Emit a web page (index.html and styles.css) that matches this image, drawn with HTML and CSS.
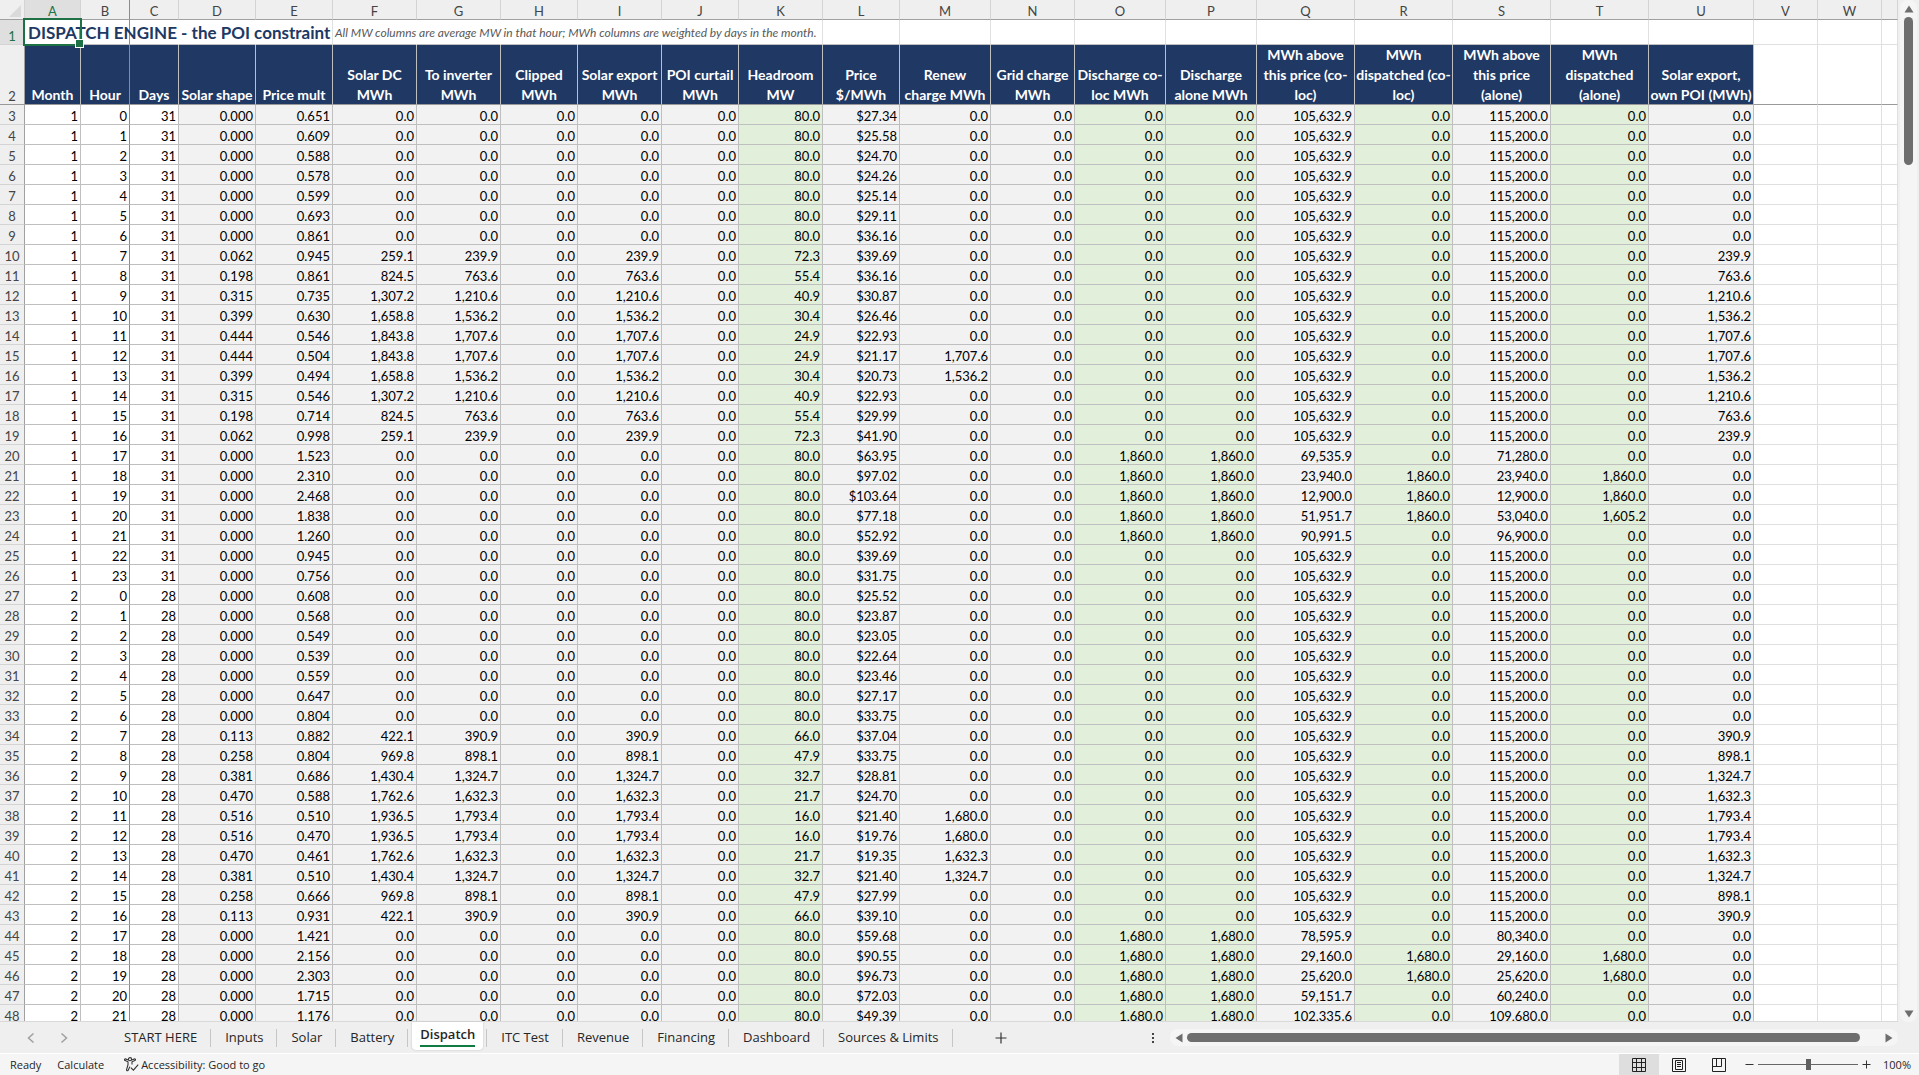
FILE: index.html
```html
<!DOCTYPE html>
<html lang="en">
<head>
    <meta charset="UTF-8">
    <meta name="viewport" content="width=device-width, initial-scale=1.0">
    <title>Dispatch</title>
    <link rel="stylesheet" href="styles.css">
</head>
<body>

    <main class="workarea">
        <div class="sheet">
            <table class="grid">
                <colgroup id="cols"></colgroup>
                <thead>
                    <tr class="letters" id="letters"></tr>
                </thead>
                <tbody id="rows"></tbody>
            </table>
        </div>

        <div class="vscroll">
            <svg width="10" height="8" viewBox="0 0 10 8"><path d="M5 0.5L9.5 7.5H0.5Z" fill="#6e6e6e"/></svg>
            <div class="vscroll-track"><div class="vscroll-thumb"></div></div>
            <svg width="10" height="8" viewBox="0 0 10 8"><path d="M5 7.5L9.5 0.5H0.5Z" fill="#6e6e6e"/></svg>
        </div>
    </main>

    <nav class="tabbar">
        <div class="arrows">
            <button class="arrow" aria-label="Previous sheet"><svg width="8" height="12" viewBox="0 0 8 12"><path d="M6.5 1.5L1.5 6L6.5 10.5" fill="none" stroke="#a0a0a0" stroke-width="1.5"/></svg></button>
            <button class="arrow" aria-label="Next sheet"><svg width="8" height="12" viewBox="0 0 8 12"><path d="M1.5 1.5L6.5 6L1.5 10.5" fill="none" stroke="#a0a0a0" stroke-width="1.5"/></svg></button>
        </div>
        <div class="tabs">
            <button class="tab">START HERE</button>
            <button class="tab">Inputs</button>
            <button class="tab">Solar</button>
            <button class="tab">Battery</button>
            <button class="tab active"><span>Dispatch</span></button>
            <button class="tab">ITC Test</button>
            <button class="tab">Revenue</button>
            <button class="tab">Financing</button>
            <button class="tab">Dashboard</button>
            <button class="tab">Sources &amp; Limits</button>
        </div>
        <button class="add" aria-label="New sheet"><svg width="12" height="12" viewBox="0 0 12 12"><path d="M6 0.5V11.5M0.5 6H11.5" stroke="#333" stroke-width="1.2"/></svg></button>
        <div class="splitter"><i></i><i></i><i></i></div>
        <div class="hscroll">
            <svg width="8" height="10" viewBox="0 0 8 10"><path d="M0.5 5L7.5 0.5V9.5Z" fill="#6e6e6e"/></svg>
            <div class="hscroll-track"><div class="hscroll-thumb"></div></div>
            <svg width="8" height="10" viewBox="0 0 8 10"><path d="M7.5 5L0.5 0.5V9.5Z" fill="#6e6e6e"/></svg>
        </div>
    </nav>

    <footer class="status">
        <span class="status-text">Ready</span>
        <span class="status-text">Calculate</span>
        <button class="access">
            <svg width="15" height="15" viewBox="0 0 15 15" fill="none" stroke="#333" stroke-width="1.1">
                <circle cx="6" cy="2.2" r="1.6"/>
                <path d="M4.4 2.9L1.3 1.9C0.3 1.8 0.2 3.3 1.1 3.6L4 4.8V7.6L2.6 12.6C2.4 13.9 3.9 14.2 4.3 13.1L5.8 9.6"/>
                <path d="M7.6 2.9L10.7 1.9C11.7 1.8 11.8 3.3 10.9 3.6L8 4.8V7.4"/>
                <path d="M6.8 10.6L9.4 13.2L14.2 7.6"/>
            </svg>
            Accessibility: Good to go
        </button>

        <div class="views">
            <button class="view on" aria-label="Normal view"><svg width="14" height="14" viewBox="0 0 14 14" fill="none" stroke="#222"><path d="M0.5 0.5H13.5V13.5H0.5ZM4.5 0.5V13.5M9.5 0.5V13.5M0.5 4.5H13.5M0.5 9.5H13.5"/></svg></button>
            <button class="view" aria-label="Page layout view"><svg width="14" height="14" viewBox="0 0 14 14" fill="none" stroke="#222"><path d="M0.5 0.5H13.5V13.5H0.5ZM3.5 2.5H10.5V11.5H3.5ZM5 4.5H9M5 6.5H9M5 8.5H9"/></svg></button>
            <button class="view" aria-label="Page break view"><svg width="14" height="14" viewBox="0 0 14 14" fill="none" stroke="#222"><path d="M0.5 0.5H13.5V13.5H0.5ZM4.5 0.5V8.5M9.5 0.5V8.5M0.5 8.5H9.5"/></svg></button>
        </div>
        <div class="zoom">
            <button class="zoom-btn" aria-label="Zoom out"><svg width="9" height="9" viewBox="0 0 9 9"><path d="M0.5 4.5H8.5" stroke="#333"/></svg></button>
            <input class="zoom-range" type="range" min="10" max="190" value="100" aria-label="Zoom">
            <button class="zoom-btn" aria-label="Zoom in"><svg width="9" height="9" viewBox="0 0 9 9"><path d="M0.5 4.5H8.5M4.5 0.5V8.5" stroke="#333"/></svg></button>
        </div>
        <button class="percent">100%</button>
    </footer>

    <script src="script.js"></script>
</body>
</html>
```

FILE: styles.css
```css
*{
    box-sizing: border-box;
}

body{
    margin: 0;
    height: 100vh;
    display: flex;
    flex-direction: column;
    overflow: hidden;
    background-color: #efefef;
    font-family: "Open Sans", "Noto Sans", sans-serif;
    color: #262626;
}

button{
    border: 0;
    padding: 0;
    background: none;
    font: inherit;
    color: inherit;
}

svg{
    display: block;
    flex: none;
}

/* sheet */

.workarea{
    flex: 1;
    min-height: 0;
    display: flex;
}

.sheet{
    flex: 1;
    min-width: 0;
    overflow: hidden;
    background-color: white;
    border-bottom: 1px solid #d9d9d9;
}

.grid{
    width: 100%;
    table-layout: fixed;
    border-collapse: separate;
    border-spacing: 0;
    font-family: Lato, "Open Sans", sans-serif;
    font-size: 13px;
    line-height: 16px;
    color: black;
}

.grid th,
.grid td{
    height: 20px;
    padding: 3px 2px 0 0;
    border-right: 1px solid #e0e0e0;
    border-bottom: 1px solid #e0e0e0;
    text-align: right;
    white-space: nowrap;
    font-weight: normal;
}

.grid .letters th{
    padding: 3px 0 0;
    text-align: center;
    background-color: #efefef;
    border-right-color: #d4d4d4;
    border-bottom-color: #a0a0a0;
    color: #444;
}

.grid .rownum{
    padding: 3px 0 0;
    text-align: center;
    vertical-align: bottom;
    background-color: #efefef;
    border-right-color: #a0a0a0;
    border-bottom-color: #d4d4d4;
    color: #444;
}

.grid .picked{
    background-color: #dfdfdf !important;
    color: #1e7145 !important;
}

.corner svg{
    margin-left: 9px;
}

.grid .calc,
.grid .key,
.grid .input{
    border-color: #bfbfbf;
}

.grid .calc{
    background-color: #f2f2f2;
}

.grid .key{
    background-color: #e2efda;
}

.grid .title-row td,
.grid .title-row th{
    height: 25px;
    vertical-align: bottom;
}

.grid .title-row td{
    padding: 2px 0 0 3px;
    text-align: left;
    line-height: 22px;
}

.grid .title-row .spill{
    border-right-color: transparent;
}

.grid .title-row .under{
    border-bottom-color: #bfbfbf;
}

.grid .title-row .title{
    font-size: 17px;
    font-weight: bold;
    color: #203864;
}

.grid .title-row .note{
    padding-left: 2px;
    font-size: 12px;
    font-style: italic;
    color: #595959;
}

.a1{
    position: relative;
}

.cursor{
    position: absolute;
    inset: -2px;
    border: 2px solid #1e7145;
}

.cursor::after{
    content: "";
    position: absolute;
    right: -4px;
    bottom: -4px;
    width: 7px;
    height: 7px;
    border: 1px solid white;
    background-color: #1e7145;
}

.grid .head-row th,
.grid .head-row td{
    height: 60px;
    vertical-align: bottom;
    border-bottom-color: #999;
}

.grid .head-row .head{
    padding: 0;
    text-align: center;
    font-size: 14px;
    font-weight: bold;
    line-height: 20px;
    background-color: #203864;
    border-right-color: #bfbfbf;
    color: white;
}

.head div{
    margin-bottom: -1px;
}

/* line of the frozen panes */
.grid .frozen{
    border-right-color: #8c8c8c !important;
}

.vscroll{
    flex: none;
    width: 17px;
    margin: 0 2px 0 2px;
    padding: 5px 0 4px;
    display: flex;
    flex-direction: column;
    align-items: center;
    gap: 4px;
    border-radius: 8px;
    background-color: #f5f5f5;
}

.vscroll-track{
    flex: 1;
}

.vscroll-thumb{
    width: 9px;
    height: 15%;
    border-radius: 5px;
    background-color: #6e6e6e;
}

/* sheet tabs */

.tabbar{
    flex: none;
    height: 32px;
    display: flex;
    align-items: center;
    padding-right: 21px;
    border-bottom: 1px solid white;
    font-size: 13px;
}

.arrows{
    display: flex;
    gap: 25px;
    width: 110px;
    padding-left: 27px;
}

.tabs{
    display: flex;
    align-self: stretch;
}

.tab{
    position: relative;
    height: 30px;
    padding: 0 14px;
    line-height: 28px;
}

.tab::after{
    content: "";
    position: absolute;
    right: 0;
    top: 7px;
    width: 1px;
    height: 18px;
    background-color: #c6c6c6;
}

.tab.active{
    height: 28px;
    margin: 0 4px 0 4px;
    padding: 0 8px 3px;
    border-radius: 0 0 4px 4px;
    background-color: white;
    box-shadow: 0 0 2px #bbb;
    font-weight: 600;
}

.tab.active::after{
    right: -4px;
}

.tab.active span{
    display: block;
    line-height: 22px;
    border-bottom: 2px solid #107c41;
}

.add{
    margin-left: 42px;
}

.splitter{
    display: flex;
    flex-direction: column;
    gap: 2px;
    margin-left: auto;
    margin-right: 16px;
}

.splitter i{
    width: 2px;
    height: 2px;
    background-color: #444;
}

.hscroll{
    flex: 0 1 728px;
    height: 17px;
    padding: 0 5px;
    display: flex;
    align-items: center;
    gap: 4px;
    border-radius: 8px;
    background-color: #f5f5f5;
}

.hscroll-track{
    flex: 1;
}

.hscroll-thumb{
    width: 97%;
    height: 9px;
    border-radius: 5px;
    background-color: #6e6e6e;
}

/* status bar */

.status{
    flex: none;
    height: 21px;
    display: flex;
    align-items: center;
    padding: 0 8px 0 10px;
    background-color: #f5f5f5;
    font-size: 11px;
}

.status-text{
    margin-right: 16px;
}

.access{
    display: flex;
    align-items: center;
    gap: 2px;
    margin-left: 4px;
}

.views{
    display: flex;
    align-self: stretch;
    margin-left: auto;
}

.view{
    width: 40px;
    display: flex;
    align-items: center;
    justify-content: center;
}

.view.on{
    background-color: #dedede;
}

.zoom{
    display: flex;
    align-items: center;
    gap: 4px;
    margin-left: 6px;
}

.zoom-range{
    appearance: none;
    width: 100px;
    height: 12px;
    margin: 0;
    background: linear-gradient(#666, #666) center / 100% 1px no-repeat;
}

.zoom-range::-webkit-slider-thumb{
    appearance: none;
    width: 5px;
    height: 11px;
    background-color: #5f5f5f;
}

.percent{
    width: 40px;
    text-align: right;
}
```

FILE: script.js
```js
const widths = [25, 56, 49, 49, 77, 77, 84, 84, 77, 84, 77, 84, 77, 91, 84, 91, 91, 98, 98, 98, 98, 105, 64, 64];

const heads = ['Month', 'Hour', 'Days', 'Solar shape', 'Price mult', 'Solar DC<br>MWh', 'To inverter<br>MWh',
    'Clipped<br>MWh', 'Solar export<br>MWh', 'POI curtail<br>MWh', 'Headroom<br>MW', 'Price<br>$/MWh',
    'Renew<br>charge MWh', 'Grid charge<br>MWh', 'Discharge co-<br>loc MWh', 'Discharge<br>alone MWh',
    'MWh above<br>this price (co-<br>loc)', 'MWh<br>dispatched (co-<br>loc)', 'MWh above<br>this price<br>(alone)',
    'MWh<br>dispatched<br>(alone)', 'Solar export,<br>own POI (MWh)'];

const green = ['K', 'O', 'P', 'R', 'T'];

// by hour: solar shape, solar DC, to inverter, headroom
const solar = {
    1: {
        7: ['0.062', '259.1', '239.9', '72.3'], 8: ['0.198', '824.5', '763.6', '55.4'],
        9: ['0.315', '1,307.2', '1,210.6', '40.9'], 10: ['0.399', '1,658.8', '1,536.2', '30.4'],
        11: ['0.444', '1,843.8', '1,707.6', '24.9'], 12: ['0.444', '1,843.8', '1,707.6', '24.9'],
        13: ['0.399', '1,658.8', '1,536.2', '30.4'], 14: ['0.315', '1,307.2', '1,210.6', '40.9'],
        15: ['0.198', '824.5', '763.6', '55.4'], 16: ['0.062', '259.1', '239.9', '72.3']
    },
    2: {
        7: ['0.113', '422.1', '390.9', '66.0'], 8: ['0.258', '969.8', '898.1', '47.9'],
        9: ['0.381', '1,430.4', '1,324.7', '32.7'], 10: ['0.470', '1,762.6', '1,632.3', '21.7'],
        11: ['0.516', '1,936.5', '1,793.4', '16.0'], 12: ['0.516', '1,936.5', '1,793.4', '16.0'],
        13: ['0.470', '1,762.6', '1,632.3', '21.7'], 14: ['0.381', '1,430.4', '1,324.7', '32.7'],
        15: ['0.258', '969.8', '898.1', '47.9'], 16: ['0.113', '422.1', '390.9', '66.0']
    }
};

const mult = {
    1: ['0.651', '0.609', '0.588', '0.578', '0.599', '0.693', '0.861', '0.945', '0.861', '0.735', '0.630', '0.546',
        '0.504', '0.494', '0.546', '0.714', '0.998', '1.523', '2.310', '2.468', '1.838', '1.260', '0.945', '0.756'],
    2: ['0.608', '0.568', '0.549', '0.539', '0.559', '0.647', '0.804', '0.882', '0.804', '0.686', '0.588', '0.510',
        '0.470', '0.461', '0.510', '0.666', '0.931', '1.421', '2.156', '2.303', '1.715', '1.176']
};

const price = {
    1: ['27.34', '25.58', '24.70', '24.26', '25.14', '29.11', '36.16', '39.69', '36.16', '30.87', '26.46', '22.93',
        '21.17', '20.73', '22.93', '29.99', '41.90', '63.95', '97.02', '103.64', '77.18', '52.92', '39.69', '31.75'],
    2: ['25.52', '23.87', '23.05', '22.64', '23.46', '27.17', '33.75', '37.04', '33.75', '28.81', '24.70', '21.40',
        '19.76', '19.35', '21.40', '27.99', '39.10', '59.68', '90.55', '96.73', '72.03', '49.39']
};

const renew = {
    1: {12: '1,707.6', 13: '1,536.2'},
    2: {11: '1,680.0', 12: '1,680.0', 13: '1,632.3', 14: '1,324.7'}
};

// evening hours: above (co-loc), dispatched (co-loc), above (alone), dispatched (alone)
const evening = {
    1: {
        17: ['69,535.9', '0.0', '71,280.0', '0.0'], 18: ['23,940.0', '1,860.0', '23,940.0', '1,860.0'],
        19: ['12,900.0', '1,860.0', '12,900.0', '1,860.0'], 20: ['51,951.7', '1,860.0', '53,040.0', '1,605.2'],
        21: ['90,991.5', '0.0', '96,900.0', '0.0']
    },
    2: {
        17: ['78,595.9', '0.0', '80,340.0', '0.0'], 18: ['29,160.0', '1,680.0', '29,160.0', '1,680.0'],
        19: ['25,620.0', '1,680.0', '25,620.0', '1,680.0'], 20: ['59,151.7', '0.0', '60,240.0', '0.0'],
        21: ['102,335.6', '0.0', '109,680.0', '0.0']
    }
};

const letter = (i) => i < 23 ? String.fromCharCode(65 + i) : '';
const frozen = (i) => i == 1 ? ' frozen' : '';

document.getElementById('cols').innerHTML = widths.map(w => `<col style="width:${w}px">`).join('') + '<col>';

let letters = '<th class="corner"><svg width="12" height="12" viewBox="0 0 12 12"><path d="M12 0V12H0Z" fill="#dadada"/></svg></th>';
for(let i = 0; i < 24; i++){
    letters += `<th class="${i == 0 ? 'picked' : ''}${frozen(i)}">${letter(i)}</th>`;
}
document.getElementById('letters').innerHTML = letters;

// row 1, the title and the note run over the empty cells
let html = '<tr class="title-row"><th class="rownum picked">1</th>';
for(let i = 0; i < 24; i++){
    let cls = (i < 4 || (i > 4 && i < 10) ? 'spill' : '') + (i < 21 ? ' under' : '') + frozen(i);
    let text = '';
    if(i == 0){
        cls += ' a1 title';
        text = 'DISPATCH ENGINE - the POI constraint<div class="cursor"></div>';
    }
    if(i == 5){
        cls += ' note';
        text = 'All MW columns are average MW in that hour; MWh columns are weighted by days in the month.';
    }
    html += `<td class="${cls}">${text}</td>`;
}
html += '</tr><tr class="head-row"><th class="rownum">2</th>';
for(let i = 0; i < 24; i++){
    html += i < 21 ? `<th class="head${frozen(i)}"><div>${heads[i]}</div></th>` : '<td></td>';
}
html += '</tr>';

for(let n = 0; n < 46; n++){
    const m = n < 24 ? 1 : 2;
    const h = n % 24;
    const s = solar[m][h] || ['0.000', '0.0', '0.0', '80.0'];
    const e = evening[m][h] || ['105,632.9', '0.0', '115,200.0', '0.0'];
    const out = evening[m][h] ? (m == 1 ? '1,860.0' : '1,680.0') : '0.0';

    const row = [m, h, m == 1 ? 31 : 28, s[0], mult[m][h], s[1], s[2], '0.0', s[2], '0.0', s[3], '$' + price[m][h],
        renew[m][h] || '0.0', '0.0', out, out, e[0], e[1], e[2], e[3], s[2]];

    html += `<tr><th class="rownum">${n + 3}</th>`;
    row.forEach((v, i) => {
        const cls = i < 3 ? 'input' : green.includes(letter(i)) ? 'key' : 'calc';
        html += `<td class="${cls}${frozen(i)}">${v}</td>`;
    });
    html += '<td></td><td></td><td></td></tr>';
}
document.getElementById('rows').innerHTML = html;
```
